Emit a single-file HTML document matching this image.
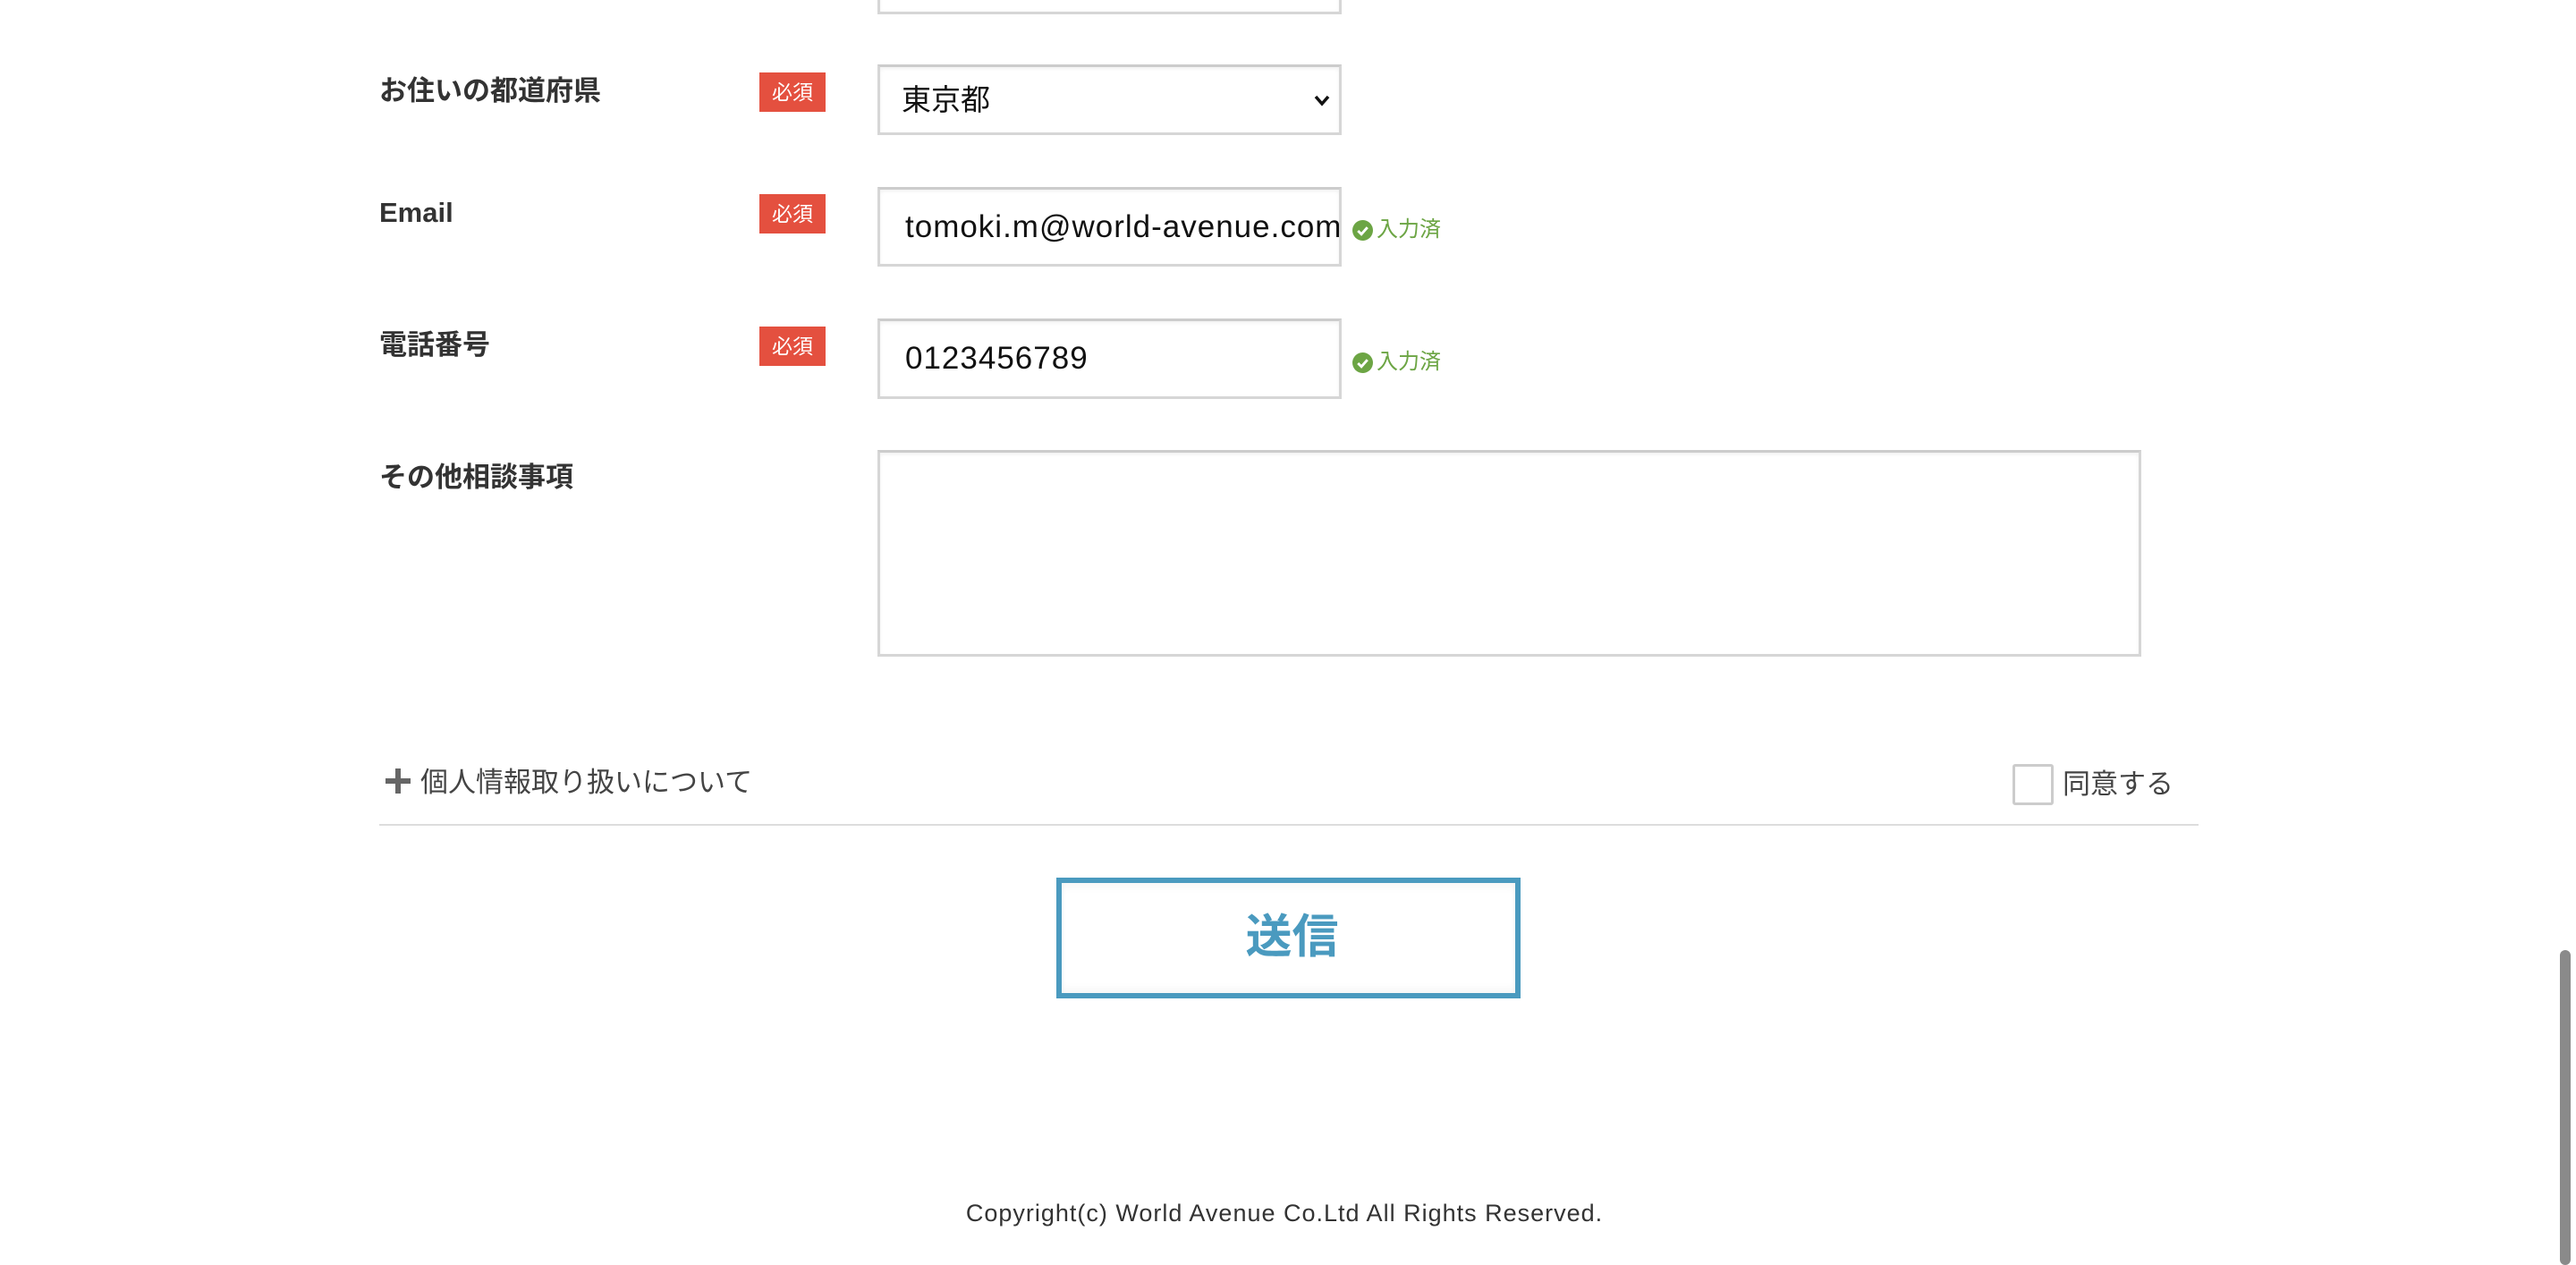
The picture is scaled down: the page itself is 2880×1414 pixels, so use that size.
<!DOCTYPE html>
<html><head><meta charset="utf-8"><style>
*{box-sizing:border-box;margin:0;padding:0}
html,body{width:2880px;height:1414px;overflow:hidden;background:#fff}
body{position:relative;font-family:"Liberation Sans","Noto Sans CJK JP",sans-serif;color:#333}
.a{position:absolute}
.lbl{font-size:31px;font-weight:bold;color:#333;left:424px;line-height:40px}
.badge{left:849px;width:74px;height:44px;background:#e4503f;color:#fff;font-size:23px;line-height:44px;text-align:center}
.inp{left:981px;width:519px;border:3px solid #d6d6d6;border-top-color:#ccc;background:#fff;box-shadow:inset 0 2px 4px rgba(0,0,0,.06);font-size:35px;color:#111;padding-left:28px;letter-spacing:1px}
.ok{left:1512px;font-size:24px;color:#6ca544;line-height:30px;display:flex;align-items:center}
.ok svg{margin-right:4px}
</style></head><body>
<div class="a inp" style="top:-10px;height:26px"></div>

<div class="a lbl" style="top:82px">お住いの都道府県</div>
<div class="a badge" style="top:81px">必須</div>
<div class="a inp" style="top:72px;height:79px;line-height:73px;padding-left:24px;letter-spacing:0;font-size:33px">東京都
<svg class="a" style="right:10px;top:30px" width="18" height="14" viewBox="0 0 18 14"><path d="M2 3l7 8 7-8" stroke="#111" stroke-width="3.5" fill="none"/></svg></div>

<div class="a lbl" style="top:218px">Email</div>
<div class="a badge" style="top:217px">必須</div>
<div class="a inp" style="top:209px;height:89px;line-height:83px;overflow:hidden;white-space:nowrap">tomoki.m@world-avenue.com</div>
<div class="a ok" style="top:242px"><svg width="23" height="23" viewBox="0 0 24 24"><circle cx="12" cy="12" r="12" fill="#6ca544"/><path d="M6.5 12.5l4 4 7-8" stroke="#fff" stroke-width="3" fill="none"/></svg>入力済</div>

<div class="a lbl" style="top:366px">電話番号</div>
<div class="a badge" style="top:365px">必須</div>
<div class="a inp" style="top:356px;height:90px;line-height:84px">0123456789</div>
<div class="a ok" style="top:390px"><svg width="23" height="23" viewBox="0 0 24 24"><circle cx="12" cy="12" r="12" fill="#6ca544"/><path d="M6.5 12.5l4 4 7-8" stroke="#fff" stroke-width="3" fill="none"/></svg>入力済</div>

<div class="a lbl" style="top:514px">その他相談事項</div>
<div class="a inp" style="top:503px;width:1413px;height:231px"></div>

<div class="a" style="left:431px;top:859px;width:28px;height:28px">
<div class="a" style="left:11px;top:0;width:6px;height:28px;background:#666"></div>
<div class="a" style="left:0;top:11px;width:28px;height:6px;background:#666"></div></div>
<div class="a" style="left:470px;top:855px;font-size:31px;color:#444;line-height:40px">個人情報取り扱いについて</div>
<div class="a" style="left:2250px;top:854px;width:46px;height:46px;border:3px solid #ccc;border-radius:3px;background:#fff"></div>
<div class="a" style="left:2306px;top:857px;font-size:31px;color:#444;line-height:40px">同意する</div>
<div class="a" style="left:424px;top:921px;width:2034px;height:2px;background:#ddd"></div>

<div class="a" style="left:1181px;top:981px;width:519px;height:135px;border:6px solid #4a9abf;background:#fff;box-shadow:inset 0 6px 8px rgba(0,0,0,.03),inset 0 -6px 8px rgba(0,0,0,.03);text-align:center;line-height:123px;font-size:52px;font-weight:bold;color:#4a9abf;padding-left:8px">送信</div>

<div class="a" style="left:0;width:2880px;top:1338px;text-align:center;font-size:27px;color:#333;line-height:36px;letter-spacing:1px;padding-right:8px">Copyright(c) World Avenue Co.Ltd All Rights Reserved.</div>

<div class="a" style="left:2862px;top:1062px;width:12px;height:352px;border-radius:6px;background:#8a8a8a"></div>
</body></html>
